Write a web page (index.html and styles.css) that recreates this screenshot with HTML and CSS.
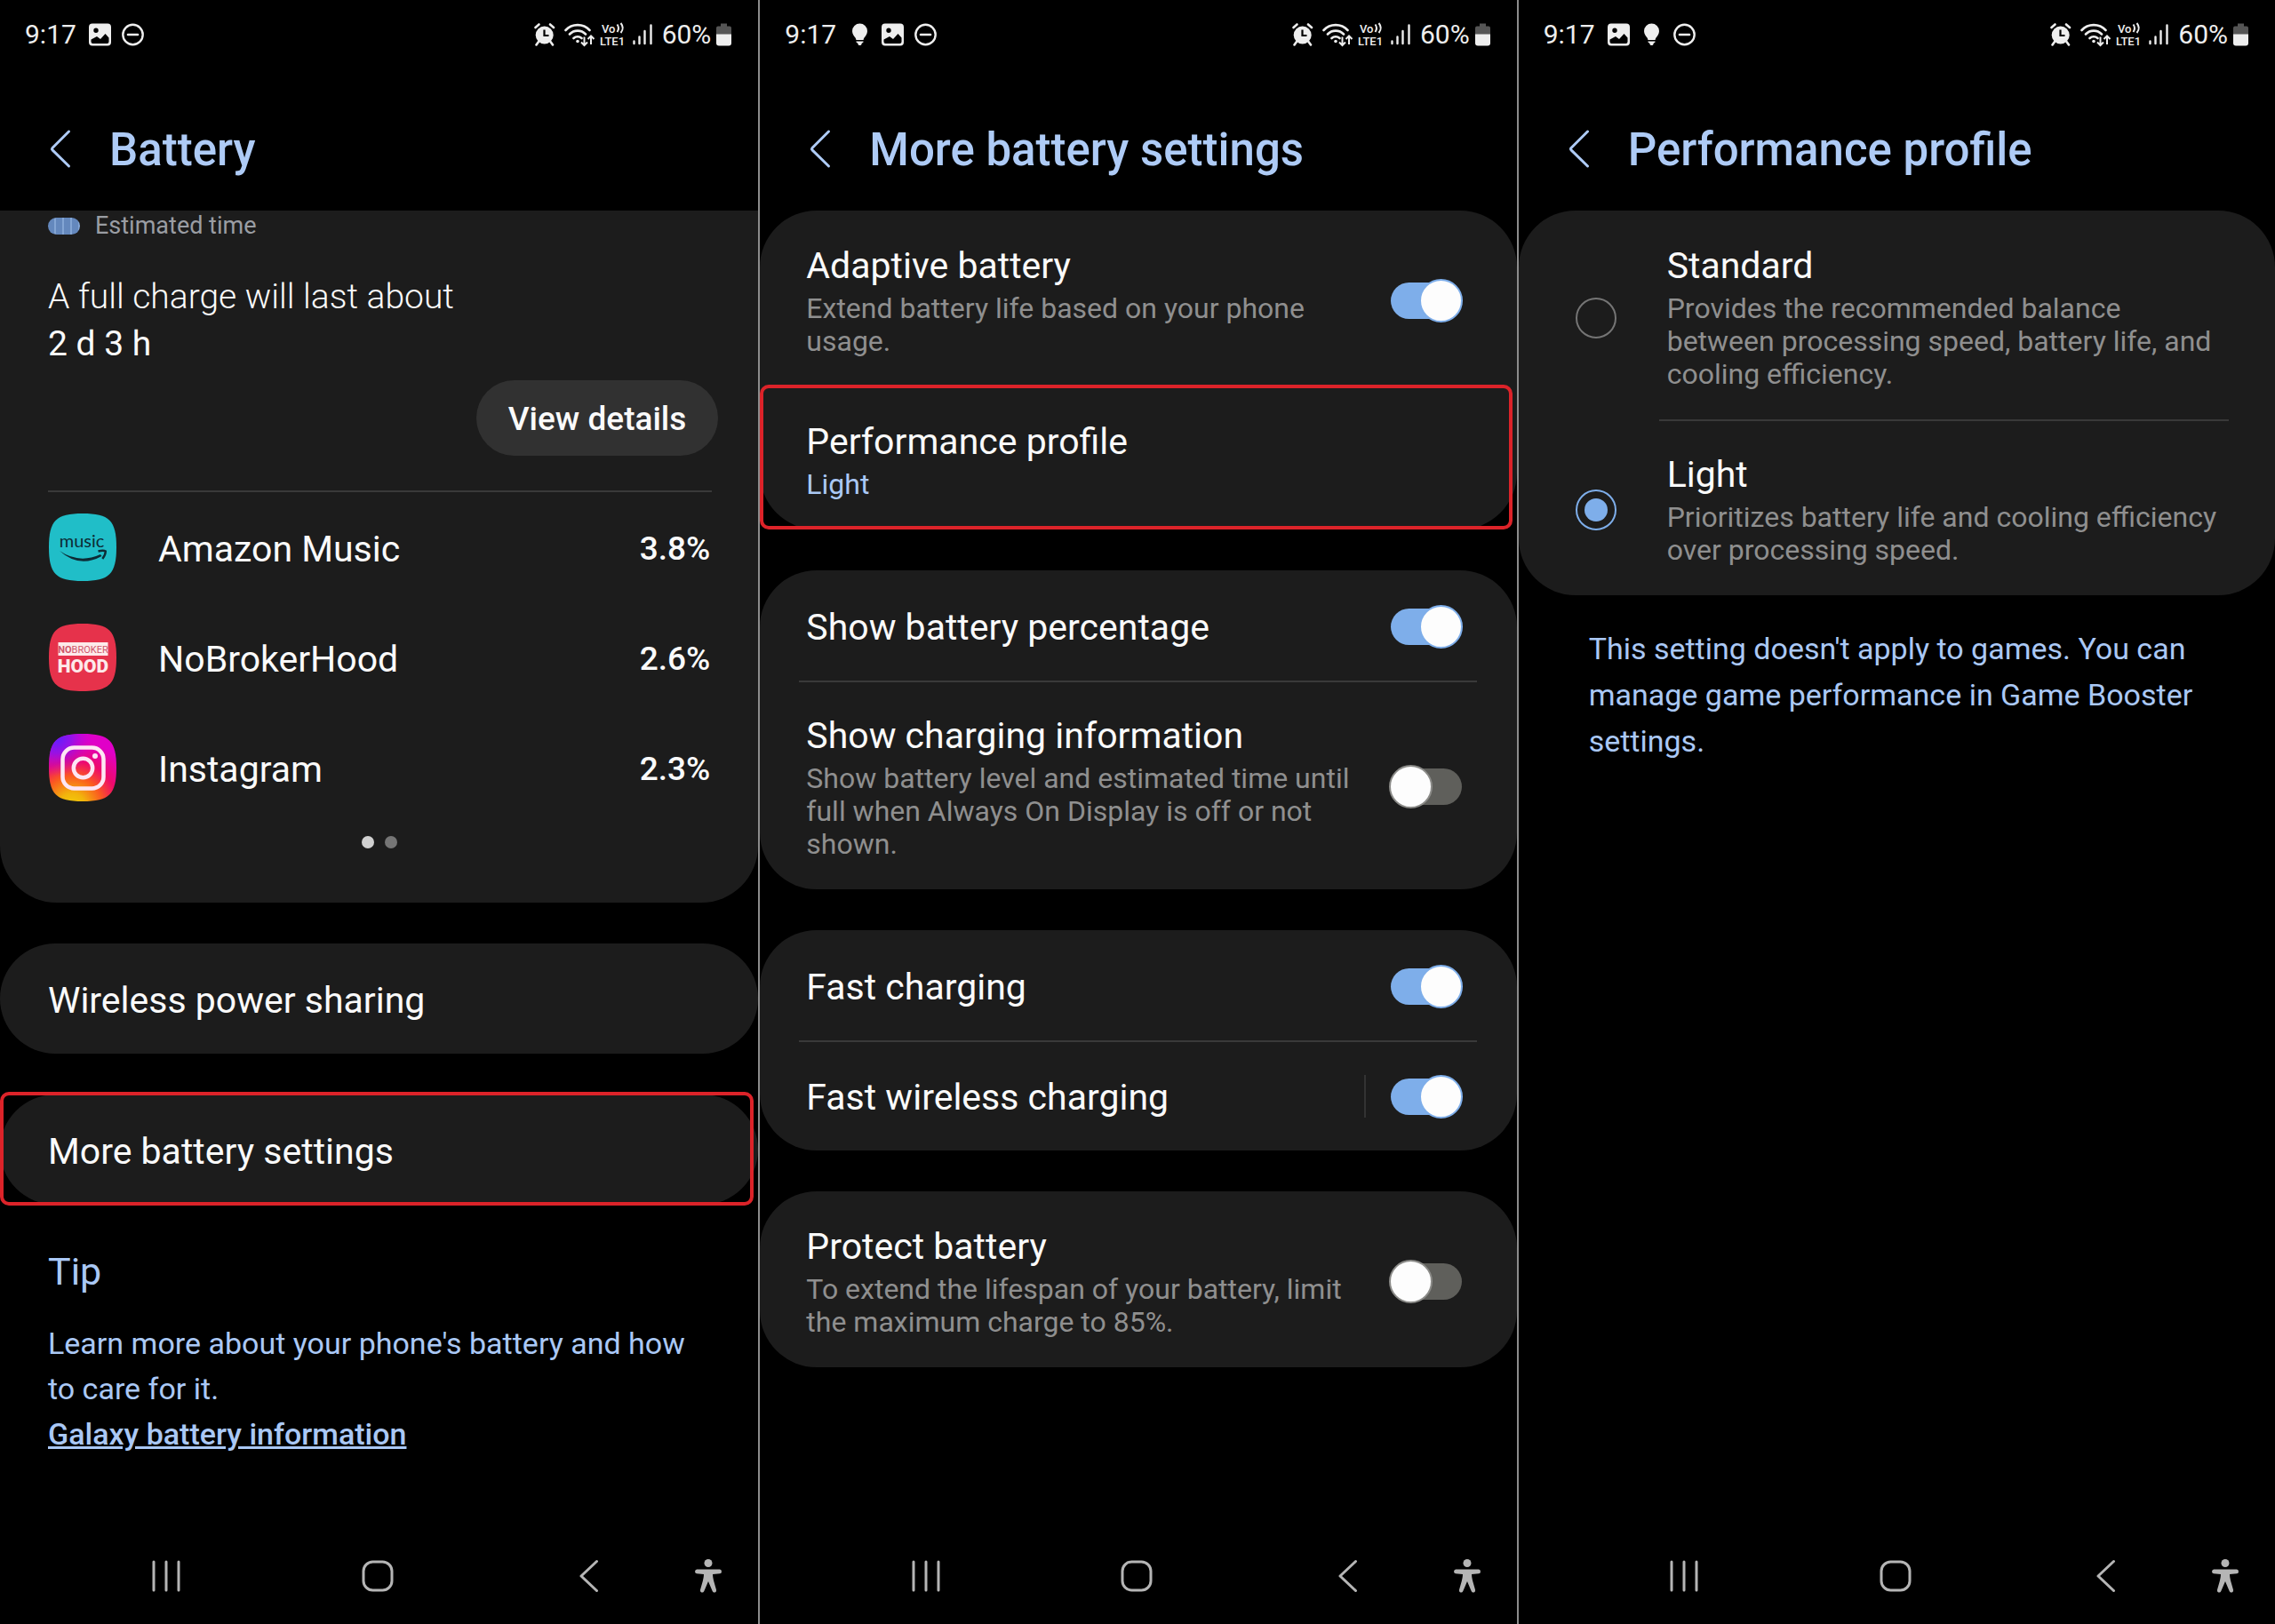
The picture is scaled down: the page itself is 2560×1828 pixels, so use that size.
FILE: index.html
```html
<!DOCTYPE html>
<html lang="en">
<head>
<meta charset="utf-8">
<meta name="viewport" content="width=device-width, initial-scale=1">
<title>Battery settings</title>
<link rel="stylesheet" href="styles.css">
</head>
<body>
<svg class="sprite" aria-hidden="true">
  <symbol id="i-picture" viewBox="0 0 25 26">
    <path fill="#eee" fill-rule="evenodd" d="M4 0.5h17a4 4 0 0 1 4 4v17a4 4 0 0 1-4 4H4a4 4 0 0 1-4-4v-17a4 4 0 0 1 4-4ZM8 5.5a2.700 2.700 0 1 0 0.010 5.400A2.700 2.700 0 0 0 8 5.500ZM2.500 18.500v2.500a2 2 0 0 0 2 2h16a2 2 0 0 0 2-2v-4.500l-4-4.500-5.500 6-4-3Z"/>
  </symbol>
  <symbol id="i-dnd" viewBox="0 0 25 26">
    <circle cx="12.500" cy="13" r="11.200" fill="none" stroke="#eee" stroke-width="2.400"/>
    <path d="M7 13h11" stroke="#eee" stroke-width="2.600" stroke-linecap="round"/>
  </symbol>
  <symbol id="i-bulb" viewBox="0 0 25 26">
    <path fill="#eee" d="M12.500 0.500a8.500 8.500 0 0 1 8.500 8.500c0 3.500-2 5.500-3.500 7.500-.6.800-.8 1.500-.9 2.500H8.400c-.1-1-.3-1.700-.9-2.500C6 14.500 4 12.500 4 9A8.500 8.500 0 0 1 12.500 0.500ZM8.500 20.500h8v1l-2 1.500v1l-1 1h-2l-1-1v-1l-2-1.500Z"/>
  </symbol>
  <symbol id="i-alarm" viewBox="0 0 28 26">
    <path d="M1.500 5 5.500 1.500M22 5 18 1.500M5 21l-2.500 3.500M18.500 21l2.500 3.500" stroke="#eee" stroke-width="2.600" stroke-linecap="round"/>
    <circle cx="11.700" cy="13.500" r="10" fill="#eee"/>
    <path d="M11.500 7.500v6.500h5" fill="none" stroke="#000" stroke-width="2.200"/>
  </symbol>
  <symbol id="i-wifi" viewBox="0 0 34 28">
    <g fill="none" stroke="#eee" stroke-width="2.600" stroke-linecap="round">
      <path d="M1.500 9a18.500 18.500 0 0 1 27 0M6 13.500a12.500 12.500 0 0 1 18 0M10.500 18a6.500 6.500 0 0 1 9 0"/>
    </g>
    <circle cx="15" cy="21.500" r="1.800" fill="#eee"/>
    <path d="M22.500 16.500v9M19 22.500l3.500 3.500 3.500-3.500M30 25v-9M26.500 19l3.500-3.500 3.500 3.500" fill="none" stroke="#eee" stroke-width="2"/>
  </symbol>
  <symbol id="i-signal" viewBox="0 0 27 26">
    <path d="M1.500 20.500v2.500M7.500 15.500v7.500M13.500 9v14M20.500 2.500v20.500" stroke="#eee" stroke-width="2.400" stroke-linecap="round"/>
  </symbol>
  <symbol id="i-battery" viewBox="0 0 17 26">
    <path fill="#555" d="M5 0.500h7v3h3a2 2 0 0 1 2 2V13H0V5.500a2 2 0 0 1 2-2h3Z"/>
    <path fill="#eee" d="M0 12.500h17v10a3 3 0 0 1-3 3H3a3 3 0 0 1-3-3Z"/>
  </symbol>
  <symbol id="i-back" viewBox="0 0 24 48">
    <path d="M21.500 3 3 21.500q-1 1.200 0 2.400L21.500 42" fill="none" stroke="#aecbf6" stroke-width="3" stroke-linecap="round" stroke-linejoin="round"/>
  </symbol>
  <symbol id="i-recents" viewBox="0 0 34 36">
    <path d="M3 2v32M17 2v32M31 2v32" stroke="#b5b5b5" stroke-width="3" stroke-linecap="round"/>
  </symbol>
  <symbol id="i-home" viewBox="0 0 36 36">
    <rect x="2" y="2" width="32" height="32" rx="10.500" fill="none" stroke="#b5b5b5" stroke-width="3"/>
  </symbol>
  <symbol id="i-navback" viewBox="0 0 24 38">
    <path d="M20.500 2.500 3 19l17.500 16.500" fill="none" stroke="#b5b5b5" stroke-width="3" stroke-linecap="round" stroke-linejoin="round"/>
  </symbol>
  <symbol id="i-person" viewBox="0 0 30 38">
    <circle cx="15" cy="4.500" r="4.500" fill="#b5b5b5"/>
    <path fill="#b5b5b5" d="M2 11.500h26q2 .300 2 2.500t-2 2.300l-8 .700q0 3 1 7l3 10.500q.400 2.500-1.500 3-2 .300-2.800-1.500L15 25l-4.700 11q-.8 1.800-2.800 1.500-1.900-.5-1.500-3L9 24q1-4 1-7l-8-.7Q0 16 0 14t2-2.500Z"/>
  </symbol>
</svg>

<main class="screens">

  <section class="screen" aria-labelledby="t1">
    <div class="status">
      <div class="status-left">
        <span class="time">9:17</span>
        <svg class="s-ico"><use href="#i-picture"/></svg>
        <svg class="s-ico"><use href="#i-dnd"/></svg>
      </div>
      <div class="status-right">
        <svg class="s-alarm"><use href="#i-alarm"/></svg>
        <svg class="s-wifi"><use href="#i-wifi"/></svg>
        <svg class="s-volte" viewBox="0 0 31 28">
          <text x="2" y="11.500" class="volte-text">Vo</text>
          <text x="0" y="25.500" class="volte-text">LTE1</text>
          <path d="M19.500 2.500q3 4 0 8.500M23.500 1q4.500 5.500 0 11" fill="none" stroke="#eee" stroke-width="2"/>
        </svg>
        <svg class="s-signal"><use href="#i-signal"/></svg>
        <span>60%</span>
        <svg class="s-battery"><use href="#i-battery"/></svg>
      </div>
    </div>
    <header class="bar">
      <button class="back" aria-label="Back"><svg><use href="#i-back"/></svg></button>
      <h1 id="t1">Battery</h1>
    </header>

    <div class="cards">
      <div class="card card-flat">
        <div class="usage">
          <div class="legend"><span class="swatch"></span>Estimated time</div>
          <p class="lasting">A full charge will last about<br><strong>2 d 3 h</strong></p>
          <button class="pill">View details</button>
        </div>
        <ul class="apps">
          <li>
            <svg class="app-icon" viewBox="0 0 76 76" aria-hidden="true">
              <path fill="#20bec8" d="M38 0C68 0 76 8 76 38S68 76 38 76 0 68 0 38 8 0 38 0Z"/>
              <text x="37" y="38" class="music-text">music</text>
              <path fill="#0d2b35" d="M12 42Q34 57 58 46L59.500 48Q34 62 12 42Z"/>
              <path d="M55.500 42.500q6-1.500 8.300 0 0 4-3.500 8.500" fill="none" stroke="#0d2b35" stroke-width="2.400"/>
            </svg>
            <span class="app-name">Amazon Music</span>
            <span class="app-pct">3.8%</span>
          </li>
          <li>
            <svg class="app-icon" viewBox="0 0 76 76" aria-hidden="true">
              <path fill="#e6324b" d="M38 0C68 0 76 8 76 38S68 76 38 76 0 68 0 38 8 0 38 0Z"/>
              <path fill="#fdeaea" d="M10.500 21h56v15h-56Z"/>
              <text x="38.500" y="32.500" class="nb-top"><tspan class="nb-bold">NO</tspan>BROKER</text>
              <text x="38.500" y="55" class="nb-hood">HOOD</text>
            </svg>
            <span class="app-name">NoBrokerHood</span>
            <span class="app-pct">2.6%</span>
          </li>
          <li>
            <svg class="app-icon" viewBox="0 0 76 76" aria-hidden="true">
              <defs>
                <radialGradient id="ig1" gradientUnits="userSpaceOnUse" cx="26" cy="82" r="76">
                  <stop offset="0" stop-color="#f2d00a"/>
                  <stop offset=".2" stop-color="#f2b40c"/>
                  <stop offset=".45" stop-color="#fb5a20"/>
                  <stop offset=".68" stop-color="#ee0a6a"/>
                  <stop offset="1" stop-color="#e000c8"/>
                </radialGradient>
                <radialGradient id="ig2" gradientUnits="userSpaceOnUse" cx="8" cy="4" r="44">
                  <stop offset="0" stop-color="#5a20ff"/>
                  <stop offset=".4" stop-color="#8a14f0" stop-opacity=".85"/>
                  <stop offset="1" stop-color="#d000d8" stop-opacity="0"/>
                </radialGradient>
              </defs>
              <path fill="url(#ig1)" d="M38 0C68 0 76 8 76 38S68 76 38 76 0 68 0 38 8 0 38 0Z"/>
              <path fill="url(#ig2)" d="M38 0C68 0 76 8 76 38S68 76 38 76 0 68 0 38 8 0 38 0Z"/>
              <rect x="15.500" y="15.500" width="46" height="46" rx="13" fill="none" stroke="#fde6f4" stroke-width="4.500"/>
              <circle cx="38.500" cy="38.500" r="10.700" fill="none" stroke="#fde6f4" stroke-width="4.500"/>
              <circle cx="52" cy="25" r="3" fill="#fde6f4"/>
            </svg>
            <span class="app-name">Instagram</span>
            <span class="app-pct">2.3%</span>
          </li>
        </ul>
        <div class="dots"><span class="dot dot-on"></span><span class="dot"></span></div>
      </div>

      <div class="card">
        <a class="row row-single" href="#wireless"><span class="title">Wireless power sharing</span></a>
      </div>
      <div class="card">
        <a class="row row-single marked marked-card" href="#more"><span class="title">More battery settings</span></a>
      </div>
    </div>

    <div class="tip">
      <h2>Tip</h2>
      <p>Learn more about your phone's battery and how to care for it.</p>
      <a href="#galaxy">Galaxy battery information</a>
    </div>

    <nav class="nav" aria-label="System">
      <button aria-label="Recents"><svg class="n-recents"><use href="#i-recents"/></svg></button>
      <button aria-label="Home"><svg class="n-home"><use href="#i-home"/></svg></button>
      <button aria-label="Back"><svg class="n-back"><use href="#i-navback"/></svg></button>
      <button aria-label="Accessibility"><svg class="n-person"><use href="#i-person"/></svg></button>
    </nav>
  </section>

  <section class="screen" aria-labelledby="t2">
    <div class="status">
      <div class="status-left">
        <span class="time">9:17</span>
        <svg class="s-ico"><use href="#i-bulb"/></svg>
        <svg class="s-ico"><use href="#i-picture"/></svg>
        <svg class="s-ico"><use href="#i-dnd"/></svg>
      </div>
      <div class="status-right">
        <svg class="s-alarm"><use href="#i-alarm"/></svg>
        <svg class="s-wifi"><use href="#i-wifi"/></svg>
        <svg class="s-volte" viewBox="0 0 31 28">
          <text x="2" y="11.500" class="volte-text">Vo</text>
          <text x="0" y="25.500" class="volte-text">LTE1</text>
          <path d="M19.500 2.500q3 4 0 8.500M23.500 1q4.500 5.500 0 11" fill="none" stroke="#eee" stroke-width="2"/>
        </svg>
        <svg class="s-signal"><use href="#i-signal"/></svg>
        <span>60%</span>
        <svg class="s-battery"><use href="#i-battery"/></svg>
      </div>
    </div>
    <header class="bar">
      <button class="back" aria-label="Back"><svg><use href="#i-back"/></svg></button>
      <h1 id="t2">More battery settings</h1>
    </header>

    <div class="cards">
      <div class="card">
        <label class="row">
          <span class="text"><span class="title">Adaptive battery</span><span class="sub">Extend battery life based on your phone usage.</span></span>
          <span class="control"><input class="switch" type="checkbox" role="switch" checked></span>
        </label>
        <a class="row marked" href="#profile">
          <span class="text"><span class="title">Performance profile</span><span class="sub sub-blue">Light</span></span>
        </a>
      </div>

      <div class="card">
        <label class="row row-single">
          <span class="title">Show battery percentage</span>
          <span class="control"><input class="switch" type="checkbox" role="switch" checked></span>
        </label>
        <hr class="rule">
        <label class="row">
          <span class="text"><span class="title">Show charging information</span><span class="sub">Show battery level and estimated time until full when Always On Display is off or not shown.</span></span>
          <span class="control"><input class="switch" type="checkbox" role="switch"></span>
        </label>
      </div>

      <div class="card">
        <label class="row row-single">
          <span class="title">Fast charging</span>
          <span class="control"><input class="switch" type="checkbox" role="switch" checked></span>
        </label>
        <hr class="rule">
        <label class="row row-single">
          <span class="title">Fast wireless charging</span>
          <span class="control control-split"><input class="switch" type="checkbox" role="switch" checked></span>
        </label>
      </div>

      <div class="card">
        <label class="row">
          <span class="text"><span class="title">Protect battery</span><span class="sub">To extend the lifespan of your battery, limit the maximum charge to 85%.</span></span>
          <span class="control"><input class="switch" type="checkbox" role="switch"></span>
        </label>
      </div>
    </div>

    <nav class="nav" aria-label="System">
      <button aria-label="Recents"><svg class="n-recents"><use href="#i-recents"/></svg></button>
      <button aria-label="Home"><svg class="n-home"><use href="#i-home"/></svg></button>
      <button aria-label="Back"><svg class="n-back"><use href="#i-navback"/></svg></button>
      <button aria-label="Accessibility"><svg class="n-person"><use href="#i-person"/></svg></button>
    </nav>
  </section>

  <section class="screen" aria-labelledby="t3">
    <div class="status">
      <div class="status-left">
        <span class="time">9:17</span>
        <svg class="s-ico"><use href="#i-picture"/></svg>
        <svg class="s-ico"><use href="#i-bulb"/></svg>
        <svg class="s-ico"><use href="#i-dnd"/></svg>
      </div>
      <div class="status-right">
        <svg class="s-alarm"><use href="#i-alarm"/></svg>
        <svg class="s-wifi"><use href="#i-wifi"/></svg>
        <svg class="s-volte" viewBox="0 0 31 28">
          <text x="2" y="11.500" class="volte-text">Vo</text>
          <text x="0" y="25.500" class="volte-text">LTE1</text>
          <path d="M19.500 2.500q3 4 0 8.500M23.500 1q4.500 5.500 0 11" fill="none" stroke="#eee" stroke-width="2"/>
        </svg>
        <svg class="s-signal"><use href="#i-signal"/></svg>
        <span>60%</span>
        <svg class="s-battery"><use href="#i-battery"/></svg>
      </div>
    </div>
    <header class="bar">
      <button class="back" aria-label="Back"><svg><use href="#i-back"/></svg></button>
      <h1 id="t3">Performance profile</h1>
    </header>

    <div class="cards">
      <div class="card">
        <label class="row row-radio">
          <input class="radio" type="radio" name="profile">
          <span class="text"><span class="title">Standard</span><span class="sub">Provides the recommended balance between processing speed, battery life, and cooling efficiency.</span></span>
        </label>
        <hr class="rule rule-radio">
        <label class="row row-radio">
          <input class="radio" type="radio" name="profile" checked>
          <span class="text"><span class="title">Light</span><span class="sub">Prioritizes battery life and cooling efficiency over processing speed.</span></span>
        </label>
      </div>
    </div>
    <p class="note">This setting doesn't apply to games. You can manage game performance in Game Booster settings.</p>

    <nav class="nav" aria-label="System">
      <button aria-label="Recents"><svg class="n-recents"><use href="#i-recents"/></svg></button>
      <button aria-label="Home"><svg class="n-home"><use href="#i-home"/></svg></button>
      <button aria-label="Back"><svg class="n-back"><use href="#i-navback"/></svg></button>
      <button aria-label="Accessibility"><svg class="n-person"><use href="#i-person"/></svg></button>
    </nav>
  </section>

</main>
</body>
</html>
```

FILE: styles.css
```css
*, *::before, *::after { box-sizing: border-box; }

body {
  margin: 0;
  background: #000;
  color: #fafafa;
  font-family: Roboto, "Liberation Sans", sans-serif;
}

h1, h2, p, ul { margin: 0; padding: 0; }

button {
  margin: 0;
  padding: 0;
  border: 0;
  background: none;
  color: inherit;
  font-family: inherit;
}

svg { display: block; }

.sprite { position: absolute; width: 0; height: 0; }

.screens {
  display: grid;
  grid-template-columns: repeat(3, minmax(0, 1fr));
  min-height: 100vh;
}

.screen { --inset: 54px; display: flex; flex-direction: column; }
.screen + .screen { --inset: 52px; border-left: 2px solid #8c8c8c; }

/* Status bar */
.status {
  display: flex;
  justify-content: space-between;
  align-items: center;
  height: 77px;
  padding: 0 30px 0 28px;
  color: #eee;
  font-size: 30px;
  line-height: 36px;
}
.status-left { display: flex; align-items: center; gap: 12px; }
.status-right { display: flex; align-items: center; gap: 6px; }
.time { padding-right: 2px; }
.s-ico { width: 25px; height: 26px; }
.s-alarm { width: 28px; height: 26px; }
.s-wifi { width: 34px; height: 28px; }
.s-volte { width: 31px; height: 28px; }
.s-signal { width: 27px; height: 26px; }
.s-battery { width: 17px; height: 26px; }
.volte-text { font-size: 13px; font-weight: 500; fill: #eee; }

/* Title bar */
.bar {
  display: flex;
  align-items: center;
  gap: 43px;
  height: 160px;
  padding: 24px 52px 0 56px;
  color: #aecbf6;
}
.bar h1 { font-size: 51px; line-height: 60px; font-weight: 500; }
.back svg { width: 24px; height: 48px; }

/* Cards and rows */
.cards { display: flex; flex-direction: column; gap: 46px; }
.card { border-radius: 64px; background: #1c1c1c; }
.card-flat { border-radius: 0 0 64px 64px; }

.row {
  display: flex;
  align-items: center;
  position: relative;
  padding: 38px 62px 32px var(--inset);
  color: inherit;
  text-decoration: none;
}
.row-single { padding-top: 40px; padding-bottom: 36px; }
.row-radio { gap: 57px; padding-left: 64px; padding-right: 55px; }

.text { display: flex; flex: 1; flex-direction: column; gap: 6px; }
.title { flex: 1; font-size: 41px; line-height: 48px; }
.sub { color: #8f8f8f; font-size: 32px; line-height: 37px; }
.sub-blue { color: #aac8f5; }

.rule { height: 2px; margin: 0 45px -2px 44px; border: 0; background: #393939; }
.rule-radio { margin: 0 52px -2px 158px; }

.marked::after {
  content: "";
  position: absolute;
  inset: -2px 5px 0 0;
  border: 4px solid #dc2329;
  border-radius: 10px;
}
.marked-card::after { inset: -3px 5px -1px 0; }

/* Controls */
.control {
  display: flex;
  align-items: center;
  height: 48px;
  margin: -2px 0 0;
  padding-left: 28px;
  border-left: 2px solid transparent;
}
.control-split { border-left-color: #333; }

.switch {
  appearance: none;
  position: relative;
  width: 80px;
  height: 41px;
  margin: 0;
  border-radius: 21px;
  background: #5f5f5b;
}
.switch::before {
  content: "";
  position: absolute;
  top: -4px;
  left: -2px;
  width: 49px;
  height: 49px;
  border: 2px solid #8b8b88;
  border-radius: 50%;
  background: #fdfdfd;
}
.switch:checked { background: #7eaeea; }
.switch:checked::before { left: 32px; border-color: #7eaeea; }

.radio {
  appearance: none;
  display: grid;
  place-items: center;
  width: 46px;
  height: 46px;
  margin: 0;
  border: 2px solid #757575;
  border-radius: 50%;
}
.radio:checked { border-color: #7eaeea; }
.radio:checked::before {
  content: "";
  width: 26px;
  height: 26px;
  border-radius: 50%;
  background: #7eaeea;
}

/* Battery usage */
.usage { display: flex; flex-direction: column; padding: 1px 45px 39px 54px; }
.legend {
  display: flex;
  align-items: center;
  gap: 17px;
  color: #9a9da3;
  font-size: 27px;
  line-height: 32px;
}
.swatch {
  width: 36px;
  height: 19px;
  border-radius: 10px;
  background: repeating-linear-gradient(90deg, #6488bd 0 7px, #83a5d4 7px 9px);
}
.lasting { margin-top: 38px; font-size: 39px; line-height: 53px; font-weight: 300; }
.lasting strong { font-weight: 400; }
.pill {
  align-self: flex-end;
  height: 85px;
  margin-top: 14px;
  padding: 2px 36px 0;
  border-radius: 43px;
  background: #313131;
  font-size: 37px;
  font-weight: 500;
}

.apps { margin: 0 52px 0 54px; border-top: 2px solid #393939; list-style: none; }
.apps li { display: flex; align-items: center; height: 124px; padding: 0 2px 0 1px; }
.app-icon { width: 76px; height: 76px; }
.app-name { flex: 1; padding: 3px 0 0 47px; font-size: 41px; line-height: 48px; }
.app-pct { padding-top: 3px; font-size: 37px; line-height: 48px; font-weight: 500; }
.music-text { fill: #0d2b35; font-family: Lato, sans-serif; font-size: 20px; text-anchor: middle; }
.nb-top { fill: #d0566a; font-size: 11px; text-anchor: middle; }
.nb-bold { font-weight: 700; }
.nb-hood { fill: #fdeaea; font-size: 21px; font-weight: 900; text-anchor: middle; }

.dots { display: flex; justify-content: center; gap: 12px; padding: 15px 0 61px; }
.dot { width: 14px; height: 14px; border-radius: 50%; background: #757575; }
.dot-on { background: #d0d0d0; }

/* Text blocks outside cards */
.tip { padding: 49px 52px 0 54px; color: #aac8f5; font-size: 34px; line-height: 51px; }
.tip h2 { margin-bottom: 30px; font-size: 43px; line-height: 52px; font-weight: 400; }
.tip a { color: inherit; font-weight: 500; }
.note { padding: 34px 64px 0 79px; color: #aac8f5; font-size: 34px; line-height: 52px; }

/* System navigation */
.nav {
  display: grid;
  grid-template-columns: repeat(3, 1fr) 30px;
  align-items: center;
  height: 108px;
  margin-top: auto;
  padding: 0 41px 0 68px;
}
.nav button { display: grid; place-items: center; }
.n-recents { width: 34px; height: 36px; }
.n-home { width: 36px; height: 36px; }
.n-back { width: 24px; height: 38px; }
.n-person { width: 30px; height: 38px; }
```
